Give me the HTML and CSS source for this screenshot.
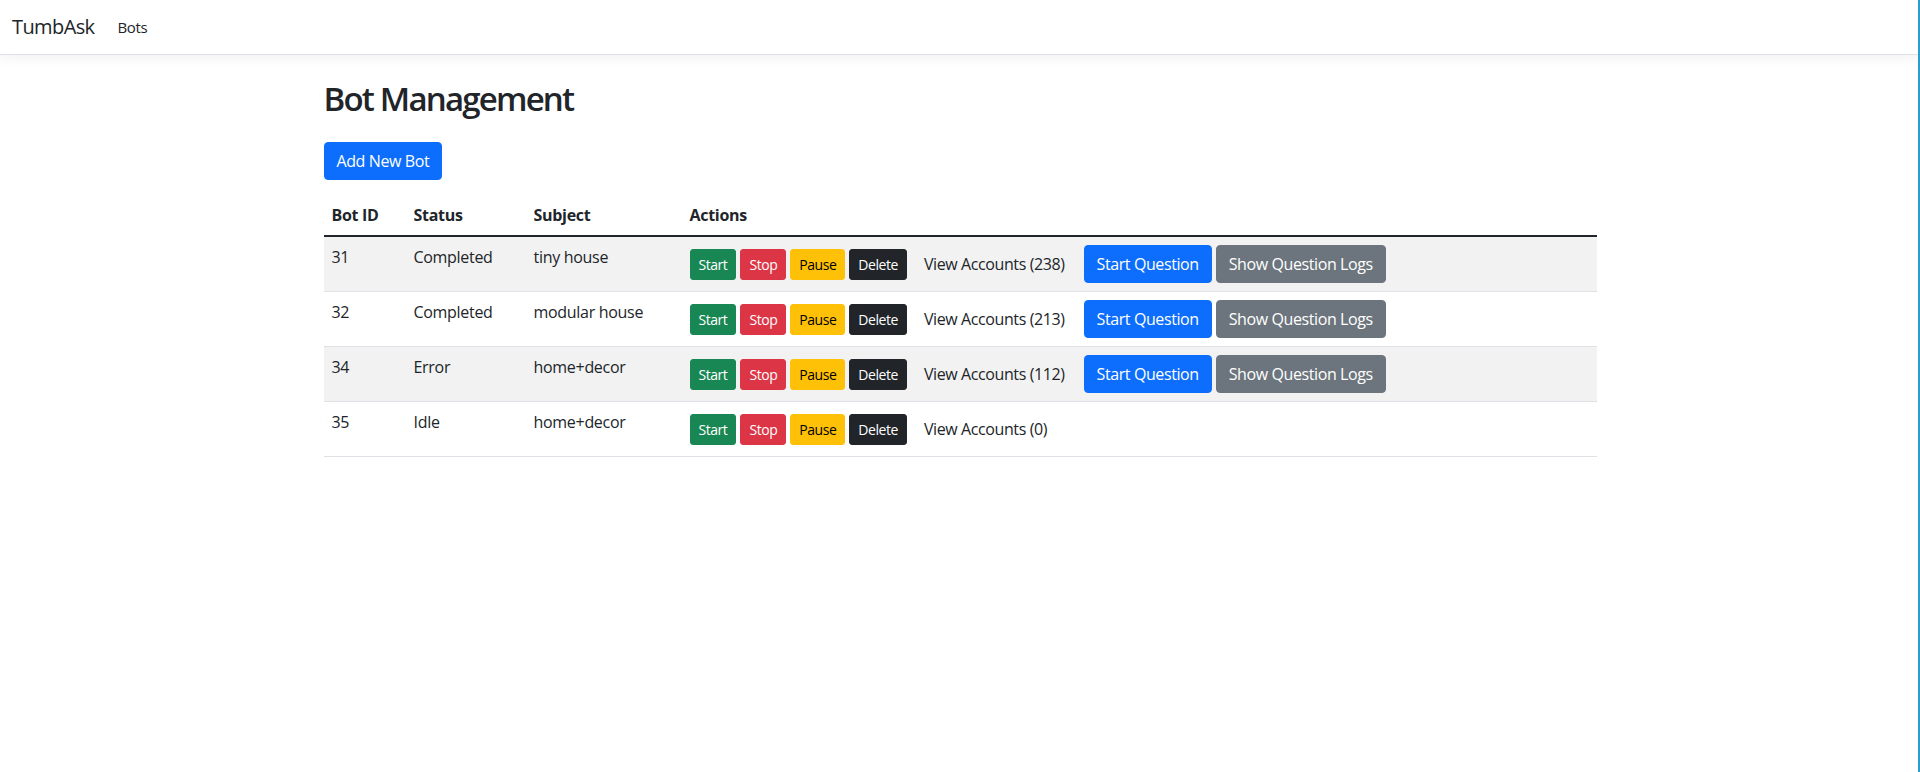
FILE: index.html
```html
<!DOCTYPE html>
<html lang="en">
<head>
<meta charset="utf-8">
<title>Bot Management - TumbAsk</title>
<link rel="stylesheet" href="styles.css">
</head>
<body>
<header class="navbar">
  <a class="brand" href="#">TumbAsk</a>
  <nav class="nav"><a class="nav-link" href="#">Bots</a></nav>
</header>
<main class="container">
  <h1 class="page-title">Bot Management</h1>
  <div class="toolbar">
    <button class="btn btn-primary">Add New Bot</button>
  </div>
  <table class="table">
    <colgroup>
      <col class="c-id">
      <col class="c-status">
      <col class="c-subject">
      <col>
    </colgroup>
    <thead>
      <tr><th>Bot ID</th><th>Status</th><th>Subject</th><th>Actions</th></tr>
    </thead>
    <tbody>
      <tr class="striped">
        <td>31</td><td>Completed</td><td>tiny house</td>
        <td>
          <div class="actions">
            <button class="btn btn-sm btn-success">Start</button>
            <button class="btn btn-sm btn-danger">Stop</button>
            <button class="btn btn-sm btn-warning">Pause</button>
            <button class="btn btn-sm btn-dark">Delete</button>
            <a class="btn btn-plain" href="#">View Accounts (238)</a>
            <button class="btn btn-primary btn-question">Start Question</button>
            <button class="btn btn-secondary">Show Question Logs</button>
          </div>
        </td>
      </tr>
      <tr>
        <td>32</td><td>Completed</td><td>modular house</td>
        <td>
          <div class="actions">
            <button class="btn btn-sm btn-success">Start</button>
            <button class="btn btn-sm btn-danger">Stop</button>
            <button class="btn btn-sm btn-warning">Pause</button>
            <button class="btn btn-sm btn-dark">Delete</button>
            <a class="btn btn-plain" href="#">View Accounts (213)</a>
            <button class="btn btn-primary btn-question">Start Question</button>
            <button class="btn btn-secondary">Show Question Logs</button>
          </div>
        </td>
      </tr>
      <tr class="striped">
        <td>34</td><td>Error</td><td>home+decor</td>
        <td>
          <div class="actions">
            <button class="btn btn-sm btn-success">Start</button>
            <button class="btn btn-sm btn-danger">Stop</button>
            <button class="btn btn-sm btn-warning">Pause</button>
            <button class="btn btn-sm btn-dark">Delete</button>
            <a class="btn btn-plain" href="#">View Accounts (112)</a>
            <button class="btn btn-primary btn-question">Start Question</button>
            <button class="btn btn-secondary">Show Question Logs</button>
          </div>
        </td>
      </tr>
      <tr>
        <td>35</td><td>Idle</td><td>home+decor</td>
        <td>
          <div class="actions">
            <button class="btn btn-sm btn-success">Start</button>
            <button class="btn btn-sm btn-danger">Stop</button>
            <button class="btn btn-sm btn-warning">Pause</button>
            <button class="btn btn-sm btn-dark">Delete</button>
            <a class="btn btn-plain" href="#">View Accounts (0)</a>
          </div>
        </td>
      </tr>
    </tbody>
  </table>
</main>
</body>
</html>
```
FILE: styles.css
```css
* {
  box-sizing: border-box;
}

html,
body {
  margin: 0;
  padding: 0;
}

body {
  font-family: "Open Sans", "Segoe UI", sans-serif;
  font-size: 16px;
  line-height: 1.5;
  color: #212529;
  background: #fff;
  min-height: 772px;
}

body::after {
  content: "";
  position: fixed;
  top: 0;
  right: 0;
  width: 2px;
  height: 100%;
  background: #2a9fca;
}

/* Navbar */
.navbar {
  display: flex;
  align-items: center;
  height: 55px;
  padding: 0 12px;
  background: #fff;
  border-bottom: 1px solid #dee2e6;
  box-shadow: 0 0.25rem 0.75rem rgba(0, 0, 0, 0.05);
}

.brand {
  font-size: 20px;
  line-height: 30px;
  color: #212529;
  text-decoration: none;
  margin-right: 16px;
  letter-spacing: -0.6px;
}

.nav {
  display: flex;
}

.nav-link {
  font-size: 15px;
  line-height: 22px;
  padding: 0 7px;
  color: #212529;
  text-decoration: none;
  letter-spacing: -0.4px;
}

/* Page */
.container {
  width: 1273px;
  margin: 0 auto;
  padding-top: 23px;
}

.page-title {
  font-size: 33px;
  font-weight: 600;
  line-height: 42px;
  margin: 0 0 22px;
  letter-spacing: -1.8px;
}

.toolbar {
  display: flex;
  margin-bottom: 15px;
}

/* Buttons */
.btn {
  display: inline-block;
  font-family: inherit;
  font-size: 16px;
  font-weight: 400;
  line-height: 24px;
  padding: 6px 12px;
  border: 1px solid transparent;
  border-radius: 4px;
  color: #fff;
  text-decoration: none;
  white-space: nowrap;
  cursor: pointer;
  letter-spacing: -0.4px;
}

.btn-sm {
  font-size: 14px;
  line-height: 21px;
  padding: 4px 8px;
  border-radius: 3px;
  letter-spacing: -0.45px;
}

.btn-primary {
  background: #0d6efd;
  border-color: #0d6efd;
}

.btn-secondary {
  background: #6c757d;
  border-color: #6c757d;
}

.btn-success {
  background: #198754;
  border-color: #198754;
}

.btn-danger {
  background: #dc3545;
  border-color: #dc3545;
}

.btn-warning {
  background: #ffc107;
  border-color: #ffc107;
  color: #000;
}

.btn-dark {
  background: #212529;
  border-color: #212529;
}

.btn-plain {
  background: transparent;
  color: #212529;
}

.btn-question {
  margin-left: 2px;
}

/* Table */
.table {
  width: 100%;
  table-layout: fixed;
  border-collapse: collapse;
  color: #212529;
}

.c-id {
  width: 82px;
}

.c-status {
  width: 120px;
}

.c-subject {
  width: 156px;
}

.table th {
  text-align: left;
  font-weight: 700;
  padding: 8px;
  line-height: 24px;
  vertical-align: bottom;
  border-bottom: 2px solid #212529;
  letter-spacing: -0.3px;
}

.table td {
  padding: 8px;
  line-height: 24px;
  vertical-align: top;
  border-bottom: 1px solid #dee2e6;
  letter-spacing: -0.3px;
}

.table tr.striped td {
  background: #f2f2f2;
}

.actions {
  display: flex;
  align-items: baseline;
  gap: 4px;
}
```
